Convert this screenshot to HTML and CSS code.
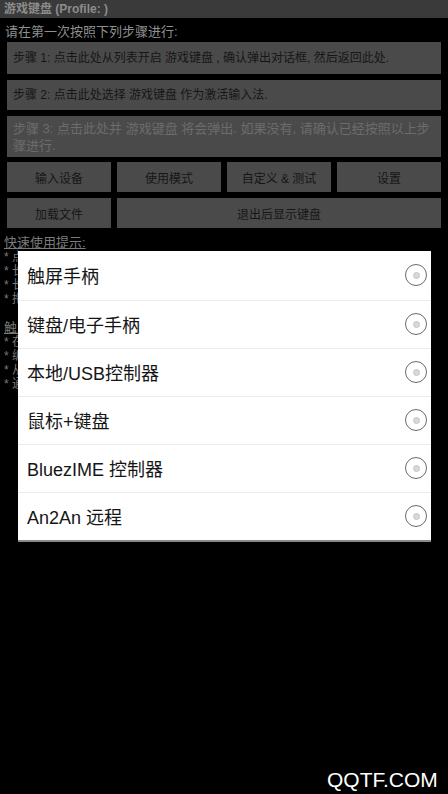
FILE: index.html
```html
<!DOCTYPE html>
<html lang="zh">
<head>
  <meta charset="UTF-8" />
  <meta name="viewport" content="width=device-width, initial-scale=1.0"/>
  <title>游戏键盘</title>
  <link rel="stylesheet" href="styles.css">
</head>
<body>
  <div class="title-bar">游戏键盘 (Profile: )</div>

  <div class="main">
    <p class="intro">请在第一次按照下列步骤进行:</p>

    <div class="steps">
      <div class="btn step">步骤 1: 点击此处从列表开启 游戏键盘 , 确认弹出对话框, 然后返回此处.</div>
      <div class="btn step">步骤 2: 点击此处选择 游戏键盘 作为激活输入法.</div>
      <div class="btn step step-off">步骤 3: 点击此处并 游戏键盘 将会弹出. 如果没有, 请确认已经按照以上步骤进行.</div>

      <div class="btn-grid">
        <div class="btn">输入设备</div>
        <div class="btn">使用模式</div>
        <div class="btn">自定义 &amp; 测试</div>
        <div class="btn">设置</div>
        <div class="btn">加载文件</div>
        <div class="btn wide">退出后显示键盘</div>
      </div>
    </div>

    <div class="tips">
      <p class="tips-head">快速使用提示:</p>
      <div class="tips-list">
        <p>* 点击输入设备</p>
        <p>* 长按屏幕按键</p>
        <p>* 长按设置</p>
        <p>* 拖动滑块</p>
      </div>
      <p class="tips-head gap">触屏手柄提示:</p>
      <div class="tips-list">
        <p>* 在游戏中</p>
        <p>* 编辑模式</p>
        <p>* 从通知栏</p>
        <p>* 通过设置</p>
      </div>
    </div>
  </div>

  <div class="dialog">
    <div class="option">触屏手柄<span class="radio"></span></div>
    <div class="option">键盘/电子手柄<span class="radio"></span></div>
    <div class="option">本地/USB控制器<span class="radio"></span></div>
    <div class="option">鼠标+键盘<span class="radio"></span></div>
    <div class="option">BluezIME 控制器<span class="radio"></span></div>
    <div class="option">An2An 远程<span class="radio"></span></div>
  </div>

  <div class="watermark">QQTF.COM</div>
</body>
</html>
```

FILE: styles.css
```css
body {
  margin: 0;
  background: #000;
  font-family: "Liberation Sans", "Noto Sans CJK SC", sans-serif;
  width: 448px;
  height: 794px;
  overflow: hidden;
  position: relative;
}

p {
  margin: 0;
}

.title-bar {
  height: 18px;
  line-height: 18px;
  background: #3a3a3a;
  color: #8c8c8c;
  font-size: 12px;
  font-weight: bold;
  padding-left: 4px;
}

.intro {
  color: #8f8f8f;
  font-size: 13px;
  line-height: 16px;
  padding: 6px 0 0 5px;
  height: 18px;
}

.steps {
  display: flex;
  flex-direction: column;
  gap: 6px;
  padding: 0 7px;
}

.btn {
  background: #4a4a4a;
  color: #161616;
  font-size: 12px;
  display: flex;
  align-items: center;
  justify-content: center;
  height: 30px;
}

.step {
  justify-content: flex-start;
  padding: 0 6px;
  line-height: 17px;
}

.steps .step:first-child {
  height: 32px;
}

.step-off {
  color: #6c6c6c;
  height: 41px;
  font-size: 13px;
  margin-bottom: -1px;
}

.btn-grid {
  display: grid;
  grid-template-columns: repeat(4, 1fr);
  gap: 6px;
}

.btn-grid .wide {
  grid-column: span 3;
}

.tips {
  color: #7a7a7a;
  font-size: 12px;
  line-height: 14px;
  padding: 7px 0 0 4px;
}

.tips-head {
  text-decoration: underline;
  font-size: 13px;
  line-height: 15px;
}

.tips-head.gap {
  margin-top: 14px;
}

/* rest of each line sits under the dialog */
.tips-list {
  width: 14px;
  overflow: hidden;
  white-space: nowrap;
}

.dialog {
  position: absolute;
  top: 251px;
  left: 18px;
  width: 413px;
  background: #fff;
  border-bottom: 2px solid #8a8a8a;
}

.option {
  box-sizing: border-box;
  height: 48px;
  border-top: 1px solid #ececec;
  display: flex;
  align-items: center;
  justify-content: space-between;
  padding: 0 4px 1px 9px;
  font-size: 18px;
  color: #151515;
}

.option:first-child {
  border-top: none;
  height: 49px;
}

.radio {
  width: 20px;
  height: 20px;
  border: 1px solid #6a6a6a;
  border-radius: 50%;
  display: flex;
  align-items: center;
  justify-content: center;
}

.radio::after {
  content: "";
  width: 5px;
  height: 5px;
  border-radius: 50%;
  background: #d8d8d8;
  border: 1px solid #c4c4c4;
}

.watermark {
  position: absolute;
  left: 327px;
  top: 768px;
  color: #fff;
  font-size: 21px;
}
```
